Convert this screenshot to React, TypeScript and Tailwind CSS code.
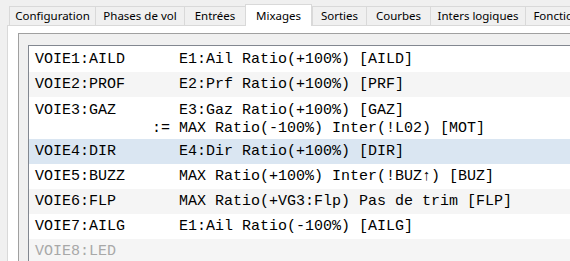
import React from 'react';

const tabs = [
  { label: 'Configuration', w: 'w-[87px]' },
  { label: 'Phases de vol', w: 'w-[89px]' },
  { label: 'Entrées', w: 'w-[60px]' },
  { label: 'Mixages', w: 'w-[67px]', active: true },
  { label: 'Sorties', w: 'w-[55px]' },
  { label: 'Courbes', w: 'w-[64px]' },
  { label: 'Inters logiques', w: 'w-[95px]' },
  { label: 'Fonctions spéciales', w: 'w-[120px]' },
];

// each row is a list of lines, already padded like the mono listing
const rows: { lines: string[]; tone: 'white' | 'gray' | 'sel'; muted?: boolean }[] = [
  { lines: ['VOIE1:AILD      E1:Ail Ratio(+100%) [AILD]'], tone: 'white' },
  { lines: ['VOIE2:PROF      E2:Prf Ratio(+100%) [PRF]'], tone: 'gray' },
  {
    lines: ['VOIE3:GAZ       E3:Gaz Ratio(+100%) [GAZ]', '             := MAX Ratio(-100%) Inter(!L02) [MOT]'],
    tone: 'white',
  },
  { lines: ['VOIE4:DIR       E4:Dir Ratio(+100%) [DIR]'], tone: 'sel' },
  { lines: ['VOIE5:BUZZ      MAX Ratio(+100%) Inter(!BUZ\u2191) [BUZ]'], tone: 'white' },
  { lines: ['VOIE6:FLP       MAX Ratio(+VG3:Flp) Pas de trim [FLP]'], tone: 'gray' },
  { lines: ['VOIE7:AILG      E1:Ail Ratio(-100%) [AILG]'], tone: 'white' },
  { lines: ['VOIE8:LED'], tone: 'gray', muted: true },
];

const toneBg = {
  white: 'bg-white',
  gray: 'bg-[#f5f5f5]',
  sel: 'bg-[#dae6f2]',
};

export default function App() {
  return (
    <div className="w-[570px] h-[261px] overflow-hidden bg-[#f0f0f0] font-['Segoe_UI','Noto_Sans',sans-serif]">
      {/* Tab bar */}
      <div className="flex items-end h-[25px] pl-[9px]">
        {tabs.map((t, i) =>
          t.active ? (
            <div
              key={t.label}
              className={`${t.w} shrink-0 h-[22px] -mb-px relative z-10 bg-white border-l border-r border-t border-[#d9d9d9] flex items-center justify-center text-[11.5px] text-black`}
            >
              {t.label}
            </div>
          ) : (
            <div
              key={t.label}
              className={`${t.w} shrink-0 h-[19px] bg-[#f0f0f0] border-t border-[#d9d9d9] ${
                i === 0 || i === 4 ? 'border-l' : ''
              } ${i === 2 ? '' : 'border-r'} flex items-center justify-center text-[11.5px] text-black whitespace-nowrap`}
            >
              {t.label}
            </div>
          )
        )}
      </div>

      {/* Tab pane */}
      <div className="ml-[7px] h-full border-l border-t border-[#d9d9d9] bg-white pl-[10px] pt-[7px]">
        <div className="h-full border-l border-t border-[#a0a0a0] bg-[#f0f0f0] pl-[9px] pt-[11px]">
          <div className="h-full border-l border-t border-[#828790] bg-white font-['Liberation_Mono','Courier_New',monospace] text-[15px]">
            {rows.map((r, i) => (
              <div
                key={i}
                className={`${toneBg[r.tone]} pl-[6px] ${i === 0 ? 'pt-[6px]' : 'pt-[5px]'} ${
                  r.lines.length > 1 ? 'pt-[4px] pb-px leading-[18px]' : 'pb-[4px] leading-[16px]'
                } ${r.muted ? 'text-[#a8a8a8]' : 'text-black'} whitespace-pre`}
              >
                {r.lines.map((l, j) => (
                  <div key={j}>{l}</div>
                ))}
              </div>
            ))}
          </div>
        </div>
      </div>
    </div>
  );
}
